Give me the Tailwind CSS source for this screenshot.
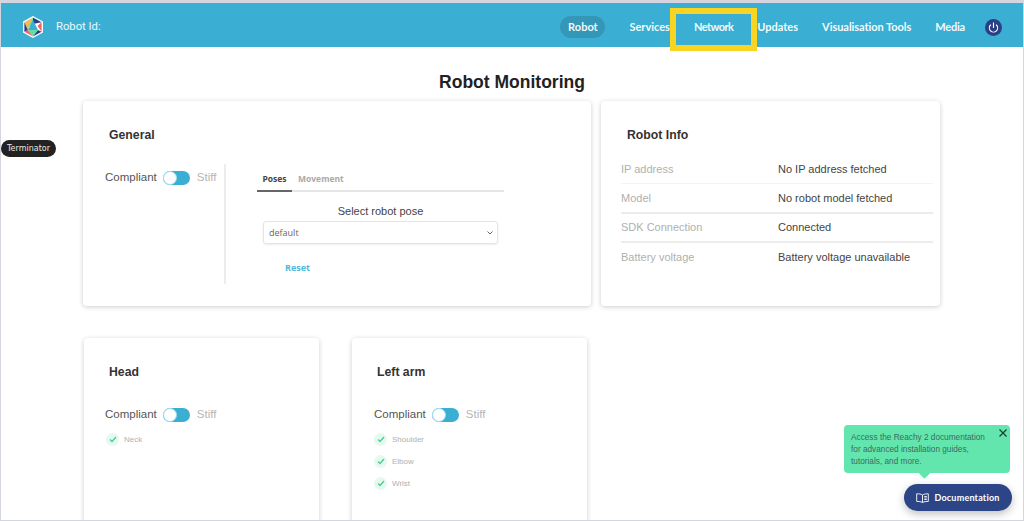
<!DOCTYPE html>
<html lang="en">
<head>
    <meta charset="UTF-8">
    <title>Robot Monitoring</title>
    <script src="https://cdn.jsdelivr.net/npm/@tailwindcss/browser@4"></script>
</head>
<body class="bg-white font-['Liberation_Sans',sans-serif]">
<div class="relative w-[1024px] h-[521px] overflow-hidden bg-white border-l border-r border-b border-t-[3px] border-[#d5d5e0]">

    <!-- Header -->
    <header class="h-[44px] bg-[#3bafd3] flex items-center justify-between pl-[21px] pr-[21px] pt-[4px] text-white">
        <div class="flex items-center gap-[12px]">
            <svg width="22" height="24" viewBox="0 0 22 24">
                <path d="M11 1 L21 6.5 V17.5 L11 23 L1 17.5 V6.5 Z" fill="#fff"/>
                <path d="M11 2.5 L19.6 7.3 L11 9 Z" fill="#2c3f86"/>
                <path d="M11 2.5 L2.4 7.3 L6 15 Z" fill="#f9b84d"/>
                <path d="M11 2.5 L6 12 L11 9 Z" fill="#5fdfa8"/>
                <path d="M19.6 7.3 V16.7 L15.5 11 Z" fill="#f2655f"/>
                <path d="M11 5 L16 15 H6 Z" fill="#3bafd3"/>
                <path d="M2.4 7.3 V16.7 L6 15.2 Z" fill="#2c3f86"/>
                <path d="M6 15 H16 L11 21.5 Z" fill="#5fdfa8"/>
                <path d="M2.4 16.7 L6 15 L11 21.5 Z" fill="#f2655f"/>
                <path d="M19.6 16.7 L16 15 L11 21.5 Z" fill="#2c3f86"/>
            </svg>
            <span class="text-[11.25px] font-['Roboto',sans-serif] text-white/90">Robot Id:</span>
        </div>
        <nav class="flex items-center gap-[24px] text-[11px] font-bold font-['Lato',sans-serif] text-white/95">
            <a class="h-[22px] w-[45px] flex items-center justify-center rounded-full bg-[#3497b8]">Robot</a>
            <a>Services</a>
            <a class="tracking-[-0.55px]">Network</a>
            <a>Updates</a>
            <a class="tracking-[-0.05px]">Visualisation Tools</a>
            <a class="tracking-[-0.2px]">Media</a>
            <span class="w-[17px] h-[17px] -ml-[4px] rounded-full bg-[#2c3f86] flex items-center justify-center">
                <svg width="11" height="11" viewBox="0 0 24 24" fill="none" stroke="#fff" stroke-width="2.5" stroke-linecap="round">
                    <path d="M12 2v10"/>
                    <path d="M18.4 6.6a9 9 0 1 1-12.8 0"/>
                </svg>
            </span>
        </nav>
    </header>

    <!-- Main Content -->
    <main class="px-[82px]">
        <h1 class="text-center text-[17.5px] leading-[22px] font-bold text-[#222] pt-[24px] mb-[8px]">Robot Monitoring</h1>

        <div class="flex gap-[10px] items-start">
            <!-- General -->
            <section class="w-[508px] h-[205px] bg-white rounded-[4px] shadow-[0_1px_5px_rgba(0,0,0,0.2)] pl-[22px] pt-[27px]">
                <h2 class="text-[12.25px] leading-[15px] font-bold text-[#333] pl-[4px]">General</h2>
                <div class="flex mt-[21px]">
                    <div class="w-[121px] h-[120px] border-r-2 border-[#ececec] flex items-start pt-[1px]">
                        <div class="flex items-center h-[26px] text-[11.5px] text-[#555]">
                            <span>Compliant</span>
                            <span class="relative w-[27px] h-[14px] ml-[6px] rounded-full bg-[#3bafd3]">
                                <span class="absolute left-0 top-0 w-[14px] h-[14px] rounded-full bg-white border border-[#a5dcee]"></span>
                            </span>
                            <span class="ml-[7px] text-[#b5b5b5]">Stiff</span>
                        </div>
                    </div>
                    <div class="w-[247px] ml-[31px]">
                        <div class="flex items-end h-[28px] border-b-2 border-[#e6e6e6] text-[8.5px] font-bold font-['Open_Sans',sans-serif]">
                            <span class="w-[35px] h-[29px] -mb-[2px] pb-[4px] flex items-end justify-center border-b-2 border-[#666] text-[#444]">Poses</span>
                            <span class="ml-[6px] pb-[4px] text-[#aaa]">Movement</span>
                        </div>
                        <p class="text-center text-[11px] leading-[14px] text-[#444] mt-[12px]">Select robot pose</p>
                        <div class="ml-[6px] w-[235px] h-[23px] mt-[3px] rounded-[3px] border border-[#e4e4e4] shadow-[0_1px_2px_rgba(0,0,0,0.08)] flex items-center justify-between pl-[5px] pr-[4px] text-[9px] font-['Open_Sans',sans-serif] text-[#666]">
                            <span>default</span>
                            <svg width="6" height="4" viewBox="0 0 6 4" fill="none" stroke="#666" stroke-width="1"><path d="M0.5 0.5 L3 3 L5.5 0.5"/></svg>
                        </div>
                        <p class="ml-[28px] mt-[17px] text-[9px] font-bold font-['Open_Sans',sans-serif] text-[#4dbbdc]">Reset</p>
                    </div>
                </div>
            </section>

            <!-- Robot Info -->
            <section class="w-[339px] h-[205px] bg-white rounded-[4px] shadow-[0_1px_5px_rgba(0,0,0,0.2)] pl-[20px] pr-[7px] pt-[27px]">
                <h2 class="text-[12.25px] leading-[15px] font-bold text-[#333] pl-[6px] mb-[12px]">Robot Info</h2>
                <div class="text-[11px]">
                    <div class="flex items-center h-[29px] border-b border-[#f3f3f3]">
                        <span class="w-[157px] text-[#b0b0b0]">IP address</span>
                        <span class="text-[#444]">No IP address fetched</span>
                    </div>
                    <div class="flex items-center h-[30px] border-b-2 border-[#ececec]">
                        <span class="w-[157px] text-[#b0b0b0]">Model</span>
                        <span class="text-[#444]">No robot model fetched</span>
                    </div>
                    <div class="flex items-center h-[29px] border-b-2 border-[#ececec]">
                        <span class="w-[157px] text-[#b0b0b0]">SDK Connection</span>
                        <span class="text-[#444]">Connected</span>
                    </div>
                    <div class="flex items-center h-[29px]">
                        <span class="w-[157px] text-[#b0b0b0]">Battery voltage</span>
                        <span class="text-[#444]">Battery voltage unavailable</span>
                    </div>
                </div>
            </section>
        </div>

        <div class="flex gap-[33px] mt-[32px] pl-[1px]">
            <!-- Head -->
            <section class="w-[235px] h-[200px] bg-white rounded-[4px] shadow-[0_1px_5px_rgba(0,0,0,0.2)] pl-[21px] pt-[27px]">
                <h2 class="text-[12.25px] leading-[15px] font-bold text-[#333] pl-[4px]">Head</h2>
                <div class="flex items-center h-[26px] mt-[22px] text-[11.5px] text-[#555]">
                    <span>Compliant</span>
                    <span class="relative w-[27px] h-[14px] ml-[6px] rounded-full bg-[#3bafd3]">
                        <span class="absolute left-0 top-0 w-[14px] h-[14px] rounded-full bg-white border border-[#a5dcee]"></span>
                    </span>
                    <span class="ml-[7px] text-[#b5b5b5]">Stiff</span>
                </div>
                <ul class="mt-[5px] pl-[1px] text-[8px] text-[#b0b0b0] space-y-[9px]">
                    <li class="flex items-center gap-[5px]">
                        <span class="w-[13px] h-[13px] rounded-full bg-[#e6f9f0] flex items-center justify-center">
                            <svg width="8" height="7" viewBox="0 0 8 7" fill="none" stroke="#45cf91" stroke-width="1.3"><path d="M1 3.5 L3 5.5 L7 1"/></svg>
                        </span>
                        Neck
                    </li>
                </ul>
            </section>

            <!-- Left arm -->
            <section class="w-[235px] h-[200px] bg-white rounded-[4px] shadow-[0_1px_5px_rgba(0,0,0,0.2)] pl-[22px] pt-[27px]">
                <h2 class="text-[12.25px] leading-[15px] font-bold text-[#333] pl-[3px]">Left arm</h2>
                <div class="flex items-center h-[26px] mt-[22px] text-[11.5px] text-[#555]">
                    <span>Compliant</span>
                    <span class="relative w-[27px] h-[14px] ml-[6px] rounded-full bg-[#3bafd3]">
                        <span class="absolute left-0 top-0 w-[14px] h-[14px] rounded-full bg-white border border-[#a5dcee]"></span>
                    </span>
                    <span class="ml-[7px] text-[#b5b5b5]">Stiff</span>
                </div>
                <ul class="mt-[5px] text-[8px] text-[#b0b0b0] space-y-[9px]">
                    <li class="flex items-center gap-[5px]">
                        <span class="w-[13px] h-[13px] rounded-full bg-[#e6f9f0] flex items-center justify-center">
                            <svg width="8" height="7" viewBox="0 0 8 7" fill="none" stroke="#45cf91" stroke-width="1.3"><path d="M1 3.5 L3 5.5 L7 1"/></svg>
                        </span>
                        Shoulder
                    </li>
                    <li class="flex items-center gap-[5px]">
                        <span class="w-[13px] h-[13px] rounded-full bg-[#e6f9f0] flex items-center justify-center">
                            <svg width="8" height="7" viewBox="0 0 8 7" fill="none" stroke="#45cf91" stroke-width="1.3"><path d="M1 3.5 L3 5.5 L7 1"/></svg>
                        </span>
                        Elbow
                    </li>
                    <li class="flex items-center gap-[5px]">
                        <span class="w-[13px] h-[13px] rounded-full bg-[#e6f9f0] flex items-center justify-center">
                            <svg width="8" height="7" viewBox="0 0 8 7" fill="none" stroke="#45cf91" stroke-width="1.3"><path d="M1 3.5 L3 5.5 L7 1"/></svg>
                        </span>
                        Wrist
                    </li>
                </ul>
            </section>
        </div>
    </main>

    <!-- Terminator tag -->
    <div class="absolute left-0 top-[137px] w-[55px] h-[17px] rounded-full bg-[#222] text-[#e8e8e8] text-[8px] font-['DejaVu_Sans',sans-serif] flex items-center justify-center">Terminator</div>

    <!-- Yellow highlight -->
    <div class="absolute left-[669px] top-[5px] w-[87px] h-[43px] border-[6px] border-[#f9d423]"></div>

    <!-- Documentation tooltip -->
    <div class="absolute left-[843px] top-[422px] w-[166px] h-[48px] rounded-[4px] bg-[#63e6ad] pl-[7px] pt-[7px] text-[8.25px] leading-[12px] text-[#3f6b5c]">
        <p>Access the Reachy 2 documentation<br>for advanced installation guides,<br>tutorials, and more.</p>
        <svg class="absolute right-[3px] top-[4px]" width="8" height="8" viewBox="0 0 8 8" stroke="#1f3a33" stroke-width="1.2"><path d="M0.5 0.5 L7.5 7.5 M7.5 0.5 L0.5 7.5"/></svg>
        <span class="absolute left-[76px] -bottom-[4px] w-[9px] h-[9px] rotate-45 bg-[#63e6ad]"></span>
    </div>
    <button class="absolute left-[903px] top-[481px] w-[108px] h-[27px] rounded-full bg-[#2c4587] shadow-[0_3px_8px_rgba(0,0,0,0.25)] flex items-center justify-center gap-[5px] text-white text-[9px] tracking-[0.2px] font-bold font-['Lato',sans-serif]">
        <svg width="13" height="10" viewBox="0 0 13 10" fill="none" stroke="#fff" stroke-width="0.9">
            <path d="M6.5 2 C5 1 3 .8 .7 .8 V8.4 C3 8.4 5 8.6 6.5 9.4 C8 8.6 10 8.4 12.3 8.4 V.8 C10 .8 8 1 6.5 2 Z M6.5 2 V9.4 M8.3 3.5 H10.8 M8.3 5 H10.8 M8.3 6.5 H10.8"/>
        </svg>
        Documentation
    </button>
</div>
</body>
</html>
